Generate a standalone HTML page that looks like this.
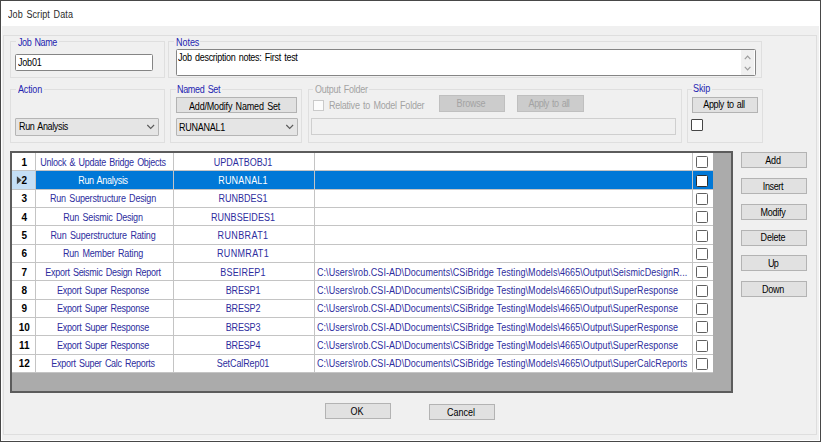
<!DOCTYPE html>
<html><head><meta charset="utf-8">
<style>
*{box-sizing:border-box;margin:0;padding:0}
html,body{width:821px;height:442px;overflow:hidden;background:#f0f0f0}
body{position:relative;font-family:"Liberation Sans",sans-serif;font-size:10px;color:#000}
.a{position:absolute}
.t{position:absolute;white-space:pre;line-height:1;-webkit-text-stroke:0px currentColor}
</style></head><body>
<div class="a" style="left:0px;top:0px;width:821px;height:442px;border:1px solid #474747;"></div>
<div class="a" style="left:1px;top:1px;width:1px;height:440px;background:#fff;"></div>
<div class="a" style="left:819px;top:1px;width:1px;height:440px;background:#fff;"></div>
<div class="a" style="left:1px;top:440px;width:819px;height:1px;background:#fff;"></div>
<div class="a" style="left:1px;top:1px;width:819px;height:25px;background:#fff;"></div>
<div class="t" style="top:9.54px;font-size:10px;color:#2a2a2a;letter-spacing:0.095px;word-spacing:1.2px;left:7.5px;transform:scaleX(0.9000);transform-origin:0 0;-webkit-text-stroke:0;">Job Script Data</div>
<div class="a" style="left:3px;top:35px;width:814px;height:400px;border:1px solid #dedede;"></div>
<div class="a" style="left:10px;top:41px;width:155px;height:37px;border:1px solid #dfdfdf;"></div>
<div class="a" style="left:16px;top:40px;width:43px;height:3px;background:#f0f0f0;"></div>
<div class="t" style="top:37.53px;font-size:10px;color:#2525b0;letter-spacing:-0.439px;word-spacing:1.2px;left:17.8px;transform:scaleX(0.9000);transform-origin:0 0;">Job Name</div>
<div class="a" style="left:15px;top:54px;width:138px;height:17px;background:#fff;border:1px solid #858585;border-radius:1.5px;"></div>
<div class="t" style="top:58.03px;font-size:10px;color:#000;letter-spacing:-0.218px;word-spacing:1.2px;left:18.1px;transform:scaleX(0.9000);transform-origin:0 0;">Job01</div>
<div class="a" style="left:168px;top:41px;width:594px;height:37px;border:1px solid #dfdfdf;"></div>
<div class="a" style="left:174px;top:40px;width:26px;height:3px;background:#f0f0f0;"></div>
<div class="t" style="top:37.83px;font-size:10px;color:#2525b0;letter-spacing:-0.042px;word-spacing:1.2px;left:175.8px;transform:scaleX(0.9000);transform-origin:0 0;">Notes</div>
<div class="a" style="left:176px;top:49px;width:580px;height:27px;background:#fff;border:1px solid #858585;border-radius:1.5px;"></div>
<div class="t" style="top:53.14px;font-size:10px;color:#000;letter-spacing:-0.313px;word-spacing:1.2px;left:178px;transform:scaleX(0.9000);transform-origin:0 0;">Job description notes: First test</div>
<div class="a" style="left:741px;top:50px;width:13px;height:25px;background:#f0f0f0;"></div>
<svg class="a" style="left:743.5px;top:54.5px" width="8" height="5" viewBox="0 0 8 5"><path d="M0.8 4.2 L3.6 1.2 L6.4 4.2" fill="none" stroke="#9c9c9c" stroke-width="1.2"/></svg>
<svg class="a" style="left:743.5px;top:65.5px" width="8" height="5" viewBox="0 0 8 5"><path d="M0.8 0.8 L3.6 3.8 L6.4 0.8" fill="none" stroke="#9c9c9c" stroke-width="1.2"/></svg>
<div class="a" style="left:10px;top:89px;width:155px;height:54px;border:1px solid #dfdfdf;"></div>
<div class="a" style="left:16px;top:88px;width:28px;height:3px;background:#f0f0f0;"></div>
<div class="t" style="top:85.33px;font-size:10px;color:#2525b0;letter-spacing:-0.185px;word-spacing:1.2px;left:18.2px;transform:scaleX(0.9000);transform-origin:0 0;">Action</div>
<div class="a" style="left:15px;top:117.5px;width:144px;height:18px;background:#e5e5e5;border:1px solid #b5b5b5;border-radius:1px;"></div>
<div class="t" style="top:121.73px;font-size:10px;color:#000;letter-spacing:-0.380px;word-spacing:1.2px;left:19.0px;transform:scaleX(0.9000);transform-origin:0 0;">Run Analysis</div>
<svg class="a" style="left:146px;top:124px" width="10" height="6" viewBox="0 0 10 6"><path d="M1.3 1 L4.7 4.4 L8.1 1" fill="none" stroke="#5a5a5a" stroke-width="1.15"/></svg>
<div class="a" style="left:170px;top:89px;width:132px;height:54px;border:1px solid #dfdfdf;"></div>
<div class="a" style="left:176px;top:88px;width:46px;height:3px;background:#f0f0f0;"></div>
<div class="t" style="top:85.33px;font-size:10px;color:#2525b0;letter-spacing:-0.356px;word-spacing:1.2px;left:176.8px;transform:scaleX(0.9000);transform-origin:0 0;">Named Set</div>
<div class="a" style="left:176px;top:97px;width:121px;height:16px;background:#e1e1e1;border:1px solid #b3b3b3;"></div>
<div class="t" style="top:101.83px;font-size:10px;color:#000;letter-spacing:-0.200px;word-spacing:1.2px;left:189.2px;transform:scaleX(0.9000);transform-origin:0 0;">Add/Modify Named Set</div>
<div class="a" style="left:176px;top:117.5px;width:122px;height:18px;background:#e5e5e5;border:1px solid #b5b5b5;border-radius:1px;"></div>
<div class="t" style="top:122.73px;font-size:10px;color:#000;letter-spacing:-0.267px;word-spacing:1.2px;left:179.0px;transform:scaleX(0.9000);transform-origin:0 0;">RUNANAL1</div>
<svg class="a" style="left:285px;top:124px" width="10" height="6" viewBox="0 0 10 6"><path d="M1.3 1 L4.7 4.4 L8.1 1" fill="none" stroke="#5a5a5a" stroke-width="1.15"/></svg>
<div class="a" style="left:308px;top:89px;width:374px;height:54px;border:1px solid #dfdfdf;"></div>
<div class="a" style="left:313px;top:88px;width:56px;height:3px;background:#f0f0f0;"></div>
<div class="t" style="top:84.73px;font-size:10px;color:#a3a3a3;letter-spacing:-0.280px;word-spacing:1.2px;left:315.0px;transform:scaleX(0.9000);transform-origin:0 0;">Output Folder</div>
<div class="a" style="left:313px;top:100px;width:11px;height:11px;background:#fcfcfc;border:1px solid #cacaca;"></div>
<div class="t" style="top:100.83px;font-size:10px;color:#a3a3a3;letter-spacing:-0.258px;word-spacing:1.2px;left:329.0px;transform:scaleX(0.9000);transform-origin:0 0;">Relative to Model Folder</div>
<div class="a" style="left:439px;top:95px;width:66px;height:17px;background:#cccccc;border:1px solid #bfbfbf;"></div>
<div class="t" style="top:98.53px;font-size:10px;color:#a3a3a3;letter-spacing:-0.222px;word-spacing:1.2px;left:371.20px;width:200px;text-align:center;transform:scaleX(0.9000);transform-origin:50% 0;">Browse</div>
<div class="a" style="left:517px;top:95px;width:67px;height:17px;background:#cccccc;border:1px solid #bfbfbf;"></div>
<div class="t" style="top:98.53px;font-size:10px;color:#a3a3a3;letter-spacing:-0.493px;word-spacing:1.2px;left:449.28px;width:200px;text-align:center;transform:scaleX(0.9000);transform-origin:50% 0;">Apply to all</div>
<div class="a" style="left:311px;top:118px;width:365px;height:17px;background:#f0f0f0;border:1px solid #cfcfcf;"></div>
<div class="a" style="left:687px;top:89px;width:76px;height:54px;border:1px solid #dfdfdf;"></div>
<div class="a" style="left:692px;top:88px;width:20px;height:3px;background:#f0f0f0;"></div>
<div class="t" style="top:84.33px;font-size:10px;color:#2525b0;letter-spacing:-0.091px;word-spacing:1.2px;left:693.1px;transform:scaleX(0.9000);transform-origin:0 0;">Skip</div>
<div class="a" style="left:692px;top:97px;width:66px;height:16px;background:#e1e1e1;border:1px solid #b3b3b3;"></div>
<div class="t" style="top:99.94px;font-size:10px;color:#000;letter-spacing:-0.450px;word-spacing:1.2px;left:623.80px;width:200px;text-align:center;transform:scaleX(0.9000);transform-origin:50% 0;">Apply to all</div>
<div class="a" style="left:691px;top:119px;width:12px;height:12px;background:#fff;border:1px solid #464646;border-radius:1px;"></div>
<div class="a" style="left:10px;top:151px;width:723px;height:242px;background:#ababab;border:2px solid #5c5c5c;"></div>
<div class="a" style="left:12px;top:153px;width:24px;height:17px;background:#fff;"></div>
<div class="a" style="left:36px;top:153px;width:677px;height:17px;background:#fff;"></div>
<div class="a" style="left:12px;top:170px;width:701px;height:1px;background:#c4c4c4;"></div>
<div class="t" style="top:157.63px;font-size:10px;color:#000;font-weight:bold;left:12.20px;width:24px;text-align:center;transform:scaleX(1.0000);transform-origin:50% 0;">1</div>
<div class="t" style="top:157.63px;font-size:10px;color:#2d2d9e;letter-spacing:-0.285px;word-spacing:1.2px;left:-46.63px;width:300px;text-align:center;transform:scaleX(0.9000);transform-origin:50% 0;">Unlock &amp; Update Bridge Objects</div>
<div class="t" style="top:157.63px;font-size:10px;color:#2d2d9e;letter-spacing:0.015px;word-spacing:1.2px;left:92.91px;width:300px;text-align:center;transform:scaleX(0.9000);transform-origin:50% 0;">UPDATBOBJ1</div>
<div class="a" style="left:696px;top:156px;width:11.5px;height:11.5px;background:#fff;border:1px solid #606060;border-radius:1.5px;"></div>
<div class="a" style="left:12px;top:171px;width:24px;height:18px;background:#c5dff5;"></div>
<div class="a" style="left:36px;top:171px;width:677px;height:18px;background:#0078d7;"></div>
<div class="a" style="left:12px;top:189px;width:701px;height:1px;background:#c4c4c4;"></div>
<div class="t" style="top:175.97px;font-size:10px;color:#000;font-weight:bold;left:12.20px;width:24px;text-align:center;transform:scaleX(1.0000);transform-origin:50% 0;">2</div>
<svg class="a" style="left:16px;top:171px" width="8" height="18" viewBox="0 0 8 18"><path d="M0.9 5.3 L5.6 9.3 L0.9 13.3 Z" fill="#404040"/></svg>
<div class="t" style="top:175.97px;font-size:10px;color:#fff;letter-spacing:-0.322px;word-spacing:1.2px;left:-46.65px;width:300px;text-align:center;transform:scaleX(0.9000);transform-origin:50% 0;">Run Analysis</div>
<div class="t" style="top:175.97px;font-size:10px;color:#fff;letter-spacing:0.203px;word-spacing:1.2px;left:92.99px;width:300px;text-align:center;transform:scaleX(0.9000);transform-origin:50% 0;">RUNANAL1</div>
<div class="a" style="left:696px;top:175px;width:11.5px;height:11.5px;background:#fff;border:1px solid #2e2e2e;border-radius:1.5px;"></div>
<div class="a" style="left:12px;top:190px;width:24px;height:17px;background:#fff;"></div>
<div class="a" style="left:36px;top:190px;width:677px;height:17px;background:#fff;"></div>
<div class="a" style="left:12px;top:207px;width:701px;height:1px;background:#c4c4c4;"></div>
<div class="t" style="top:194.30px;font-size:10px;color:#000;font-weight:bold;left:12.20px;width:24px;text-align:center;transform:scaleX(1.0000);transform-origin:50% 0;">3</div>
<div class="t" style="top:194.30px;font-size:10px;color:#2d2d9e;letter-spacing:-0.209px;word-spacing:1.2px;left:-46.59px;width:300px;text-align:center;transform:scaleX(0.9000);transform-origin:50% 0;">Run Superstructure Design</div>
<div class="t" style="top:194.30px;font-size:10px;color:#2d2d9e;letter-spacing:0.014px;word-spacing:1.2px;left:92.91px;width:300px;text-align:center;transform:scaleX(0.9000);transform-origin:50% 0;">RUNBDES1</div>
<div class="a" style="left:696px;top:193px;width:11.5px;height:11.5px;background:#fff;border:1px solid #606060;border-radius:1.5px;"></div>
<div class="a" style="left:12px;top:208px;width:24px;height:17px;background:#fff;"></div>
<div class="a" style="left:36px;top:208px;width:677px;height:17px;background:#fff;"></div>
<div class="a" style="left:12px;top:225px;width:701px;height:1px;background:#c4c4c4;"></div>
<div class="t" style="top:212.63px;font-size:10px;color:#000;font-weight:bold;left:12.20px;width:24px;text-align:center;transform:scaleX(1.0000);transform-origin:50% 0;">4</div>
<div class="t" style="top:212.63px;font-size:10px;color:#2d2d9e;letter-spacing:-0.233px;word-spacing:1.2px;left:-46.60px;width:300px;text-align:center;transform:scaleX(0.9000);transform-origin:50% 0;">Run Seismic Design</div>
<div class="t" style="top:212.63px;font-size:10px;color:#2d2d9e;letter-spacing:0.066px;word-spacing:1.2px;left:92.93px;width:300px;text-align:center;transform:scaleX(0.9000);transform-origin:50% 0;">RUNBSEIDES1</div>
<div class="a" style="left:696px;top:211px;width:11.5px;height:11.5px;background:#fff;border:1px solid #606060;border-radius:1.5px;"></div>
<div class="a" style="left:12px;top:226px;width:24px;height:18px;background:#fff;"></div>
<div class="a" style="left:36px;top:226px;width:677px;height:18px;background:#fff;"></div>
<div class="a" style="left:12px;top:244px;width:701px;height:1px;background:#c4c4c4;"></div>
<div class="t" style="top:230.97px;font-size:10px;color:#000;font-weight:bold;left:12.20px;width:24px;text-align:center;transform:scaleX(1.0000);transform-origin:50% 0;">5</div>
<div class="t" style="top:230.97px;font-size:10px;color:#2d2d9e;letter-spacing:-0.163px;word-spacing:1.2px;left:-46.57px;width:300px;text-align:center;transform:scaleX(0.9000);transform-origin:50% 0;">Run Superstructure Rating</div>
<div class="t" style="top:230.97px;font-size:10px;color:#2d2d9e;letter-spacing:0.408px;word-spacing:1.2px;left:93.08px;width:300px;text-align:center;transform:scaleX(0.9000);transform-origin:50% 0;">RUNBRAT1</div>
<div class="a" style="left:696px;top:230px;width:11.5px;height:11.5px;background:#fff;border:1px solid #606060;border-radius:1.5px;"></div>
<div class="a" style="left:12px;top:245px;width:24px;height:17px;background:#fff;"></div>
<div class="a" style="left:36px;top:245px;width:677px;height:17px;background:#fff;"></div>
<div class="a" style="left:12px;top:262px;width:701px;height:1px;background:#c4c4c4;"></div>
<div class="t" style="top:249.30px;font-size:10px;color:#000;font-weight:bold;left:12.20px;width:24px;text-align:center;transform:scaleX(1.0000);transform-origin:50% 0;">6</div>
<div class="t" style="top:249.30px;font-size:10px;color:#2d2d9e;letter-spacing:-0.162px;word-spacing:1.2px;left:-46.57px;width:300px;text-align:center;transform:scaleX(0.9000);transform-origin:50% 0;">Run Member Rating</div>
<div class="t" style="top:249.30px;font-size:10px;color:#2d2d9e;letter-spacing:0.390px;word-spacing:1.2px;left:93.08px;width:300px;text-align:center;transform:scaleX(0.9000);transform-origin:50% 0;">RUNMRAT1</div>
<div class="a" style="left:696px;top:248px;width:11.5px;height:11.5px;background:#fff;border:1px solid #606060;border-radius:1.5px;"></div>
<div class="a" style="left:12px;top:263px;width:24px;height:17px;background:#fff;"></div>
<div class="a" style="left:36px;top:263px;width:677px;height:17px;background:#fff;"></div>
<div class="a" style="left:12px;top:280px;width:701px;height:1px;background:#c4c4c4;"></div>
<div class="t" style="top:267.63px;font-size:10px;color:#000;font-weight:bold;left:12.20px;width:24px;text-align:center;transform:scaleX(1.0000);transform-origin:50% 0;">7</div>
<div class="t" style="top:267.63px;font-size:10px;color:#2d2d9e;letter-spacing:-0.311px;word-spacing:1.2px;left:-46.64px;width:300px;text-align:center;transform:scaleX(0.9000);transform-origin:50% 0;">Export Seismic Design Report</div>
<div class="t" style="top:267.63px;font-size:10px;color:#2d2d9e;letter-spacing:0.183px;word-spacing:1.2px;left:92.98px;width:300px;text-align:center;transform:scaleX(0.9000);transform-origin:50% 0;">BSEIREP1</div>
<div class="t" style="top:267.63px;font-size:10px;color:#2d2d9e;letter-spacing:0.065px;word-spacing:0.4px;left:316.8px;transform:scaleX(0.9000);transform-origin:0 0;">C:\Users\rob.CSI-AD\Documents\CSiBridge Testing\Models\4665\Output\SeismicDesignR...</div>
<div class="a" style="left:696px;top:266px;width:11.5px;height:11.5px;background:#fff;border:1px solid #606060;border-radius:1.5px;"></div>
<div class="a" style="left:12px;top:281px;width:24px;height:18px;background:#fff;"></div>
<div class="a" style="left:36px;top:281px;width:677px;height:18px;background:#fff;"></div>
<div class="a" style="left:12px;top:299px;width:701px;height:1px;background:#c4c4c4;"></div>
<div class="t" style="top:285.97px;font-size:10px;color:#000;font-weight:bold;left:12.20px;width:24px;text-align:center;transform:scaleX(1.0000);transform-origin:50% 0;">8</div>
<div class="t" style="top:285.97px;font-size:10px;color:#2d2d9e;letter-spacing:-0.312px;word-spacing:1.2px;left:-46.64px;width:300px;text-align:center;transform:scaleX(0.9000);transform-origin:50% 0;">Export Super Response</div>
<div class="t" style="top:285.97px;font-size:10px;color:#2d2d9e;letter-spacing:-0.168px;word-spacing:1.2px;left:92.82px;width:300px;text-align:center;transform:scaleX(0.9000);transform-origin:50% 0;">BRESP1</div>
<div class="t" style="top:285.97px;font-size:10px;color:#2d2d9e;letter-spacing:0.066px;word-spacing:0.4px;left:316.8px;transform:scaleX(0.9000);transform-origin:0 0;">C:\Users\rob.CSI-AD\Documents\CSiBridge Testing\Models\4665\Output\SuperResponse</div>
<div class="a" style="left:696px;top:285px;width:11.5px;height:11.5px;background:#fff;border:1px solid #606060;border-radius:1.5px;"></div>
<div class="a" style="left:12px;top:300px;width:24px;height:17px;background:#fff;"></div>
<div class="a" style="left:36px;top:300px;width:677px;height:17px;background:#fff;"></div>
<div class="a" style="left:12px;top:317px;width:701px;height:1px;background:#c4c4c4;"></div>
<div class="t" style="top:304.30px;font-size:10px;color:#000;font-weight:bold;left:12.20px;width:24px;text-align:center;transform:scaleX(1.0000);transform-origin:50% 0;">9</div>
<div class="t" style="top:304.30px;font-size:10px;color:#2d2d9e;letter-spacing:-0.312px;word-spacing:1.2px;left:-46.64px;width:300px;text-align:center;transform:scaleX(0.9000);transform-origin:50% 0;">Export Super Response</div>
<div class="t" style="top:304.30px;font-size:10px;color:#2d2d9e;letter-spacing:-0.168px;word-spacing:1.2px;left:92.82px;width:300px;text-align:center;transform:scaleX(0.9000);transform-origin:50% 0;">BRESP2</div>
<div class="t" style="top:304.30px;font-size:10px;color:#2d2d9e;letter-spacing:0.066px;word-spacing:0.4px;left:316.8px;transform:scaleX(0.9000);transform-origin:0 0;">C:\Users\rob.CSI-AD\Documents\CSiBridge Testing\Models\4665\Output\SuperResponse</div>
<div class="a" style="left:696px;top:303px;width:11.5px;height:11.5px;background:#fff;border:1px solid #606060;border-radius:1.5px;"></div>
<div class="a" style="left:12px;top:318px;width:24px;height:17px;background:#fff;"></div>
<div class="a" style="left:36px;top:318px;width:677px;height:17px;background:#fff;"></div>
<div class="a" style="left:12px;top:335px;width:701px;height:1px;background:#c4c4c4;"></div>
<div class="t" style="top:322.63px;font-size:10px;color:#000;font-weight:bold;left:12.20px;width:24px;text-align:center;transform:scaleX(1.0000);transform-origin:50% 0;">10</div>
<div class="t" style="top:322.63px;font-size:10px;color:#2d2d9e;letter-spacing:-0.312px;word-spacing:1.2px;left:-46.64px;width:300px;text-align:center;transform:scaleX(0.9000);transform-origin:50% 0;">Export Super Response</div>
<div class="t" style="top:322.63px;font-size:10px;color:#2d2d9e;letter-spacing:-0.168px;word-spacing:1.2px;left:92.82px;width:300px;text-align:center;transform:scaleX(0.9000);transform-origin:50% 0;">BRESP3</div>
<div class="t" style="top:322.63px;font-size:10px;color:#2d2d9e;letter-spacing:0.066px;word-spacing:0.4px;left:316.8px;transform:scaleX(0.9000);transform-origin:0 0;">C:\Users\rob.CSI-AD\Documents\CSiBridge Testing\Models\4665\Output\SuperResponse</div>
<div class="a" style="left:696px;top:321px;width:11.5px;height:11.5px;background:#fff;border:1px solid #606060;border-radius:1.5px;"></div>
<div class="a" style="left:12px;top:336px;width:24px;height:18px;background:#fff;"></div>
<div class="a" style="left:36px;top:336px;width:677px;height:18px;background:#fff;"></div>
<div class="a" style="left:12px;top:354px;width:701px;height:1px;background:#c4c4c4;"></div>
<div class="t" style="top:340.97px;font-size:10px;color:#000;font-weight:bold;left:12.20px;width:24px;text-align:center;transform:scaleX(1.0000);transform-origin:50% 0;">11</div>
<div class="t" style="top:340.97px;font-size:10px;color:#2d2d9e;letter-spacing:-0.312px;word-spacing:1.2px;left:-46.64px;width:300px;text-align:center;transform:scaleX(0.9000);transform-origin:50% 0;">Export Super Response</div>
<div class="t" style="top:340.97px;font-size:10px;color:#2d2d9e;letter-spacing:-0.168px;word-spacing:1.2px;left:92.82px;width:300px;text-align:center;transform:scaleX(0.9000);transform-origin:50% 0;">BRESP4</div>
<div class="t" style="top:340.97px;font-size:10px;color:#2d2d9e;letter-spacing:0.066px;word-spacing:0.4px;left:316.8px;transform:scaleX(0.9000);transform-origin:0 0;">C:\Users\rob.CSI-AD\Documents\CSiBridge Testing\Models\4665\Output\SuperResponse</div>
<div class="a" style="left:696px;top:340px;width:11.5px;height:11.5px;background:#fff;border:1px solid #606060;border-radius:1.5px;"></div>
<div class="a" style="left:12px;top:355px;width:24px;height:17px;background:#fff;"></div>
<div class="a" style="left:36px;top:355px;width:677px;height:17px;background:#fff;"></div>
<div class="a" style="left:12px;top:372px;width:701px;height:1px;background:#c4c4c4;"></div>
<div class="t" style="top:359.30px;font-size:10px;color:#000;font-weight:bold;left:12.20px;width:24px;text-align:center;transform:scaleX(1.0000);transform-origin:50% 0;">12</div>
<div class="t" style="top:359.30px;font-size:10px;color:#2d2d9e;letter-spacing:-0.309px;word-spacing:1.2px;left:-46.64px;width:300px;text-align:center;transform:scaleX(0.9000);transform-origin:50% 0;">Export Super Calc Reports</div>
<div class="t" style="top:359.30px;font-size:10px;color:#2d2d9e;letter-spacing:-0.118px;word-spacing:1.2px;left:92.85px;width:300px;text-align:center;transform:scaleX(0.9000);transform-origin:50% 0;">SetCalRep01</div>
<div class="t" style="top:359.30px;font-size:10px;color:#2d2d9e;letter-spacing:0.066px;word-spacing:0.4px;left:316.8px;transform:scaleX(0.9000);transform-origin:0 0;">C:\Users\rob.CSI-AD\Documents\CSiBridge Testing\Models\4665\Output\SuperCalcReports</div>
<div class="a" style="left:696px;top:358px;width:11.5px;height:11.5px;background:#fff;border:1px solid #606060;border-radius:1.5px;"></div>
<div class="a" style="left:35px;top:153px;width:1px;height:219px;background:#c4c4c4;"></div>
<div class="a" style="left:173px;top:153px;width:1px;height:219px;background:#c4c4c4;"></div>
<div class="a" style="left:314px;top:153px;width:1px;height:219px;background:#c4c4c4;"></div>
<div class="a" style="left:692px;top:153px;width:1px;height:219px;background:#c4c4c4;"></div>
<div class="a" style="left:741px;top:152px;width:66px;height:16px;background:#e1e1e1;border:1px solid #b3b3b3;"></div>
<div class="t" style="top:156.13px;font-size:10px;color:#000;letter-spacing:-0.231px;word-spacing:1.2px;left:673.10px;width:200px;text-align:center;transform:scaleX(0.9000);transform-origin:50% 0;">Add</div>
<div class="a" style="left:741px;top:178px;width:66px;height:16px;background:#e1e1e1;border:1px solid #b3b3b3;"></div>
<div class="t" style="top:181.89px;font-size:10px;color:#000;letter-spacing:-0.417px;word-spacing:1.2px;left:673.01px;width:200px;text-align:center;transform:scaleX(0.9000);transform-origin:50% 0;">Insert</div>
<div class="a" style="left:741px;top:204px;width:66px;height:16px;background:#e1e1e1;border:1px solid #b3b3b3;"></div>
<div class="t" style="top:207.66px;font-size:10px;color:#000;letter-spacing:-0.300px;word-spacing:1.2px;left:673.07px;width:200px;text-align:center;transform:scaleX(0.9000);transform-origin:50% 0;">Modify</div>
<div class="a" style="left:741px;top:230px;width:66px;height:16px;background:#e1e1e1;border:1px solid #b3b3b3;"></div>
<div class="t" style="top:233.41px;font-size:10px;color:#000;letter-spacing:-0.214px;word-spacing:1.2px;left:673.10px;width:200px;text-align:center;transform:scaleX(0.9000);transform-origin:50% 0;">Delete</div>
<div class="a" style="left:741px;top:255px;width:66px;height:16px;background:#e1e1e1;border:1px solid #b3b3b3;"></div>
<div class="t" style="top:259.18px;font-size:10px;color:#000;letter-spacing:-0.710px;word-spacing:1.2px;left:672.88px;width:200px;text-align:center;transform:scaleX(0.9000);transform-origin:50% 0;">Up</div>
<div class="a" style="left:741px;top:281px;width:66px;height:16px;background:#e1e1e1;border:1px solid #b3b3b3;"></div>
<div class="t" style="top:284.94px;font-size:10px;color:#000;letter-spacing:-0.249px;word-spacing:1.2px;left:673.09px;width:200px;text-align:center;transform:scaleX(0.9000);transform-origin:50% 0;">Down</div>
<div class="a" style="left:325px;top:403px;width:66px;height:16px;background:#e1e1e1;border:1px solid #b3b3b3;"></div>
<div class="t" style="top:406.94px;font-size:10px;color:#000;letter-spacing:0.096px;word-spacing:1.2px;left:257.34px;width:200px;text-align:center;transform:scaleX(0.9000);transform-origin:50% 0;">OK</div>
<div class="a" style="left:429px;top:404px;width:66px;height:16px;background:#e1e1e1;border:1px solid #b3b3b3;"></div>
<div class="t" style="top:407.64px;font-size:10px;color:#000;letter-spacing:-0.042px;word-spacing:1.2px;left:361.18px;width:200px;text-align:center;transform:scaleX(0.9000);transform-origin:50% 0;">Cancel</div>
</body></html>
